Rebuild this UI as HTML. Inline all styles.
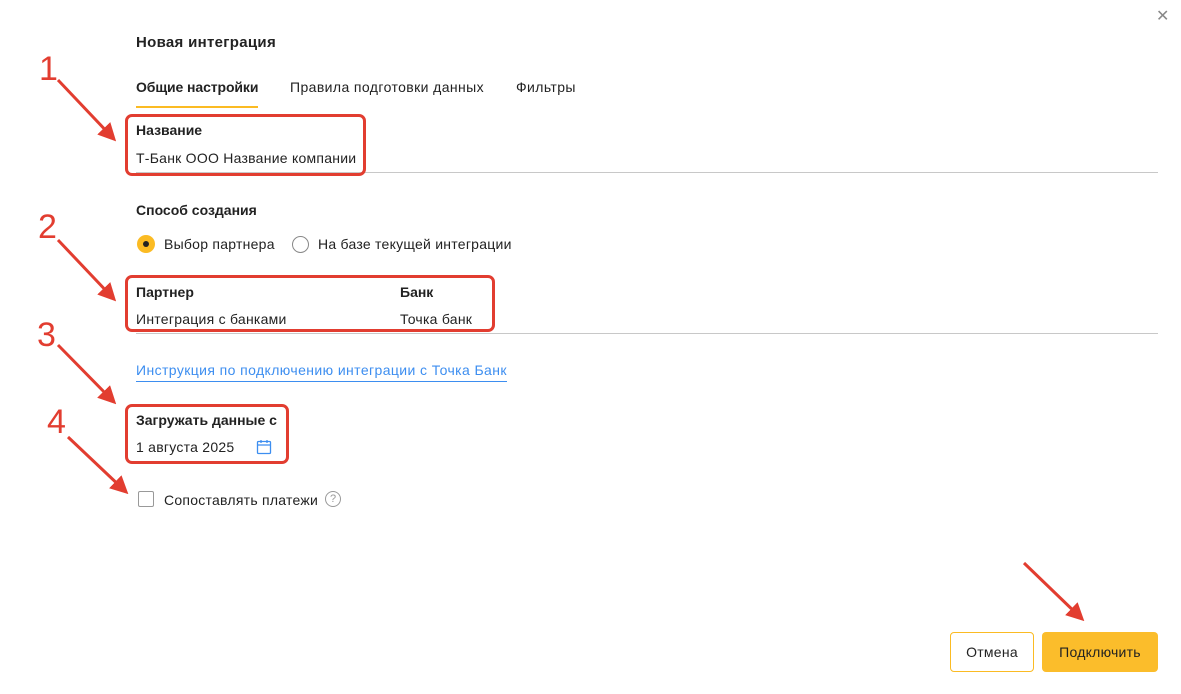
<!DOCTYPE html>
<html><head><meta charset="utf-8"><style>
*{margin:0;padding:0;box-sizing:border-box}
body{width:1181px;height:694px;background:#fff;position:relative;overflow:hidden;font-family:"Liberation Sans","DejaVu Sans",sans-serif;color:#222;font-size:14px;letter-spacing:0.25px}
.a{position:absolute;white-space:nowrap}
.b{font-weight:bold;letter-spacing:0}
.box{position:absolute;border:3px solid #e23d30;border-radius:7px}
.num{position:absolute;color:#e23d30;font-size:34px;font-family:"Liberation Sans",sans-serif;letter-spacing:0}
.line{position:absolute;height:1px;background:#c8c8c8}
</style></head><body>
<div class="a" style="left:1156px;top:6px;font-size:16px;color:#888">✕</div>
<div class="a b" style="left:136px;top:34px;font-size:15px;letter-spacing:0.3px">Новая интеграция</div>
<div class="a b" style="left:136px;top:79px;font-size:14px;letter-spacing:-0.1px">Общие настройки</div>
<div style="position:absolute;left:136px;top:106px;width:122px;height:2px;background:#fbbb23"></div>
<div class="a" style="left:290px;top:79px;font-size:14px;letter-spacing:0.4px">Правила подготовки данных</div>
<div class="a" style="left:516px;top:79px;font-size:14px;letter-spacing:0.4px">Фильтры</div>

<div class="a b" style="left:136px;top:122px">Название</div>
<div class="a" style="left:136px;top:150px">Т-Банк ООО Название компании</div>
<div class="line" style="left:136px;top:172px;width:1022px"></div>

<div class="a b" style="left:136px;top:202px">Способ создания</div>
<div style="position:absolute;left:137px;top:235px;width:18px;height:18px;border-radius:50%;background:#fbbb23"></div>
<div style="position:absolute;left:143px;top:241px;width:6px;height:6px;border-radius:50%;background:#222"></div>
<div class="a" style="left:164px;top:236px">Выбор партнера</div>
<div style="position:absolute;left:292px;top:236px;width:17px;height:17px;border-radius:50%;border:1.5px solid #888"></div>
<div class="a" style="left:318px;top:236px">На базе текущей интеграции</div>

<div class="a b" style="left:136px;top:284px">Партнер</div>
<div class="a" style="left:136px;top:311px">Интеграция с банками</div>
<div class="a b" style="left:400px;top:284px">Банк</div>
<div class="a" style="left:400px;top:311px">Точка банк</div>
<div class="line" style="left:136px;top:333px;width:1022px"></div>

<div class="a" style="left:136px;top:362px;color:#3d8ef0;border-bottom:1px solid #3d8ef0;padding-bottom:3px;letter-spacing:0.4px">Инструкция по подключению интеграции с Точка Банк</div>

<div class="a b" style="left:136px;top:412px">Загружать данные с</div>
<div class="a" style="left:136px;top:439px">1 августа 2025</div>
<svg class="a" style="left:256px;top:439px" width="16" height="16" viewBox="0 0 16 16" fill="none" stroke="#3d8ef0" stroke-width="1.3"><rect x="1.5" y="2.5" width="13" height="12" rx="1"/><path d="M1.5 6h13M5 1v3M11 1v3"/></svg>

<div style="position:absolute;left:138px;top:491px;width:16px;height:16px;border:1.5px solid #999;border-radius:2px"></div>
<div class="a" style="left:164px;top:492px">Сопоставлять платежи</div>
<div style="position:absolute;left:325px;top:491px;width:16px;height:16px;border:1.2px solid #999;border-radius:50%;font-size:11px;color:#999;text-align:center;line-height:14px;letter-spacing:0">?</div>

<div style="position:absolute;left:950px;top:632px;width:84px;height:40px;border:1px solid #fbbb23;border-radius:4px;text-align:center;line-height:38px">Отмена</div>
<div style="position:absolute;left:1042px;top:632px;width:116px;height:40px;background:#fbbd2b;border-radius:4px;text-align:center;line-height:40px">Подключить</div>

<div class="box" style="left:125px;top:114px;width:241px;height:62px"></div>
<div class="box" style="left:125px;top:275px;width:370px;height:57px"></div>
<div class="box" style="left:125px;top:404px;width:164px;height:60px"></div>

<div class="num" style="left:39px;top:50px">1</div>
<div class="num" style="left:38px;top:208px">2</div>
<div class="num" style="left:37px;top:316px">3</div>
<div class="num" style="left:47px;top:403px">4</div>

<svg class="a" style="left:0;top:0" width="1181" height="694">
<defs><marker id="m" markerWidth="6" markerHeight="6" refX="4" refY="3" orient="auto"><path d="M0,0 L6,3 L0,6 z" fill="#e23d30"/></marker></defs>
<g stroke="#e23d30" stroke-width="3" marker-end="url(#m)">
<line x1="58" y1="80" x2="112" y2="137"/>
<line x1="58" y1="240" x2="112" y2="297"/>
<line x1="58" y1="345" x2="112" y2="400"/>
<line x1="68" y1="437" x2="124" y2="490"/>
<line x1="1024" y1="563" x2="1080" y2="617"/>
</g></svg>
</body></html>
